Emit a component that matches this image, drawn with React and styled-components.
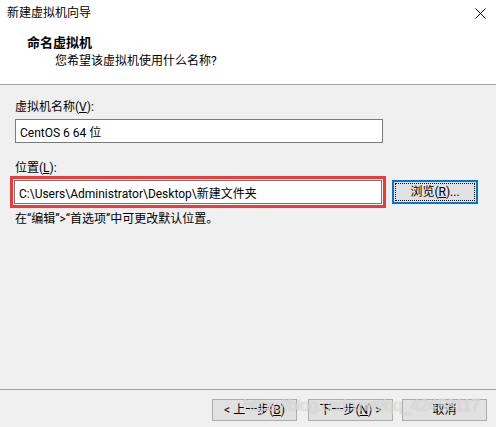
import React from 'react';
import styled, { createGlobalStyle } from 'styled-components';

const GlobalStyle = createGlobalStyle`
  html, body {
    margin: 0;
    padding: 0;
    background: #f0f0f0;
  }
  * {
    box-sizing: border-box;
  }
`;

const Window = styled.div`
  position: relative;
  width: 496px;
  height: 427px;
  display: flex;
  flex-direction: column;
  background: #f0f0f0;
  font-family: Roboto, "Noto Sans CJK SC", sans-serif;
  font-size: 12px;
  color: #000;
  overflow: hidden;
`;

const Top = styled.div`
  height: 85px;
  background: #fff;
  border-bottom: 1px solid #a0a0a0;
  display: flex;
  flex-direction: column;
`;

const TitleRow = styled.div`
  height: 26px;
  display: flex;
  align-items: center;
  justify-content: space-between;
  padding: 0 10px 0 7px;
  line-height: 16px;
`;

const Heading = styled.div`
  margin-top: 8px;
  padding-left: 27px;
  font-weight: bold;
  font-size: 13px;
  line-height: 18px;
`;

const Subtitle = styled.div`
  padding-left: 55px;
  line-height: 18px;
`;

const Body = styled.div`
  flex: 1;
  display: flex;
  flex-direction: column;
  padding: 0 15px;
`;

const Label = styled.div`
  margin-top: ${({ gap }) => gap}px;
  line-height: 16px;
`;

const Key = styled.span`
  text-decoration: underline;
`;

const TextBox = styled.div`
  width: 368px;
  height: 24px;
  margin-top: ${({ gap }) => gap || 0}px;
  background: #fff;
  border: 1px solid #7a7a7a;
  padding: 0 4px;
  display: flex;
  align-items: center;
  white-space: nowrap;
  overflow: hidden;
`;

const Row = styled.div`
  display: flex;
  align-items: center;
  margin-left: -5px;
`;

const Highlight = styled.div`
  flex-shrink: 0;
  border: 3px solid #f03a3a;
  padding: 1px;
`;

const BrowseButton = styled.div`
  flex-shrink: 0;
  margin-left: 6px;
  width: 86px;
  height: 24px;
  border: 2px solid #0078d7;
  background: #e1e1e1;
  padding: 1px;
  display: flex;
`;

const FocusRing = styled.div`
  flex: 1;
  border: 1px dotted #000;
  display: flex;
  align-items: center;
  justify-content: center;
  line-height: 16px;
`;

const Hint = styled.div`
  margin-top: 3px;
  line-height: 16px;
`;

const Footer = styled.div`
  height: 38px;
  border-top: 1px solid #a0a0a0;
  display: flex;
  justify-content: flex-end;
  padding: 9px 9px 0 0;
  gap: 9px;
`;

const Button = styled.div`
  width: 85px;
  height: 22px;
  margin-left: ${({ space }) => space || 0}px;
  background: #e1e1e1;
  border: 1px solid #adadad;
  display: flex;
  align-items: center;
  justify-content: center;
  line-height: 16px;
`;

const Watermark = styled.div`
  position: absolute;
  left: 243px;
  top: 396px;
  font-family: "Liberation Sans", Arial, sans-serif;
  font-size: 17px;
  letter-spacing: -0.7px;
  color: rgba(255, 255, 255, 0.55);
  text-shadow: 0 0 1px rgba(120, 120, 120, 0.5);
  pointer-events: none;
  white-space: nowrap;
`;

function CloseIcon() {
  return (
    <svg width="11" height="11" viewBox="0 0 11 11">
      <path d="M0.5 0.5 L10.5 10.5 M10.5 0.5 L0.5 10.5" stroke="#000" strokeWidth="1" />
    </svg>
  );
}

export default function App() {
  return (
    <Window>
      <GlobalStyle />
      <Top>
        <TitleRow>
          <span>新建虚拟机向导</span>
          <CloseIcon />
        </TitleRow>
        <Heading>命名虚拟机</Heading>
        <Subtitle>您希望该虚拟机使用什么名称?</Subtitle>
      </Top>
      <Body>
        <Label gap={14}>
          虚拟机名称(<Key>V</Key>):
        </Label>
        <TextBox gap={4}>CentOS 6 64 位</TextBox>
        <Label gap={17}>
          位置(<Key>L</Key>):
        </Label>
        <Row>
          <Highlight>
            <TextBox>C:\Users\Administrator\Desktop\新建文件夹</TextBox>
          </Highlight>
          <BrowseButton>
            <FocusRing>
              浏览(<Key>R</Key>)...
            </FocusRing>
          </BrowseButton>
        </Row>
        <Hint>在“编辑”&gt;“首选项”中可更改默认位置。</Hint>
      </Body>
      <Footer>
        <Button>
          &lt; 上一步(<Key>B</Key>)
        </Button>
        <Button space={2}>
          下一步(<Key>N</Key>) &gt;
        </Button>
        <Button>取消</Button>
      </Footer>
      <Watermark>https://blog.csdn.net/qq_42458117</Watermark>
    </Window>
  );
}
